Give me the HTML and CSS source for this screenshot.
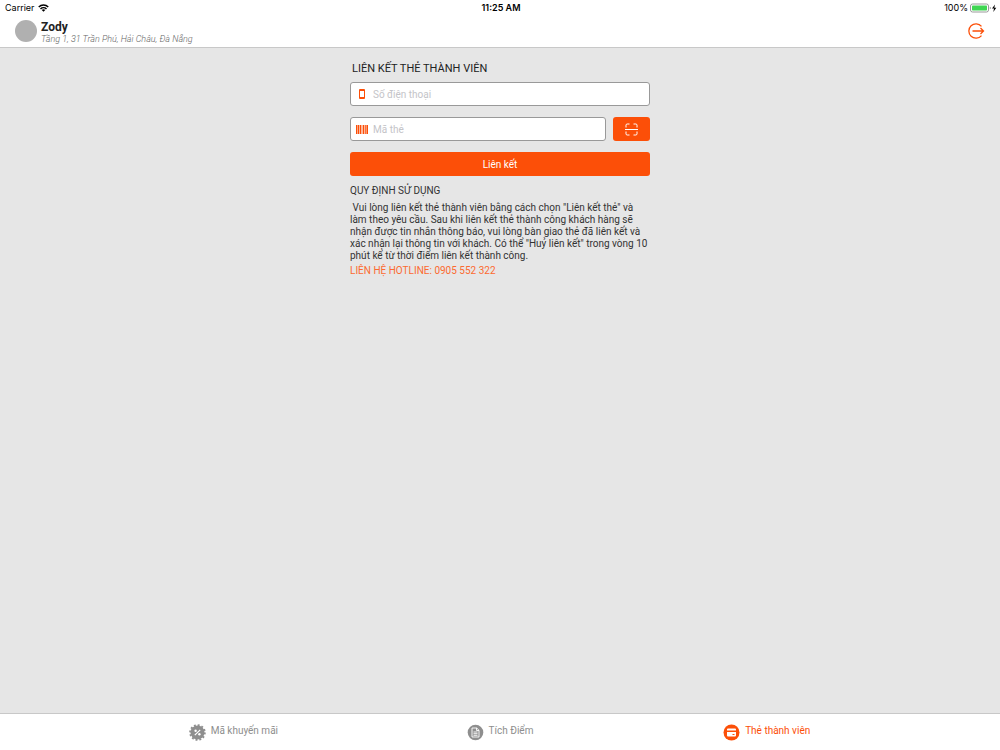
FILE: index.html
```html
<!DOCTYPE html>
<html lang="vi">
<head>
<meta charset="utf-8">
<meta name="viewport" content="width=device-width, initial-scale=1">
<title>Zody</title>
<link rel="stylesheet" href="styles.css">
</head>
<body>
<div class="status">
  <div class="status-side">
    <span>Carrier</span>
    <svg width="11" height="8" viewBox="0 0 22 16" fill="none" stroke="#000" stroke-width="3"><path d="M1.500 6a13.500 13.500 0 0 1 19 0M5 10a8.500 8.500 0 0 1 12 0"/><path d="M11 15.500 7.500 12.200a5 5 0 0 1 7 0z" fill="#000" stroke="none"/></svg>
  </div>
  <strong class="clock">11:25 AM</strong>
  <div class="status-side status-right">
    <span>100%</span>
    <svg width="27" height="10" viewBox="0 0 27 10"><rect x=".5" y="1" width="18" height="8" rx="2" fill="#fff" stroke="#999"/><rect x="2" y="2.500" width="15" height="5" rx=".7" fill="#3fd652"/><path d="M19.800 3.700v2.600q1-.3 1-1.300t-1-1.300" fill="#888"/><path d="M25 1.500 22 5.500h2L23.300 9l3-4.300h-2z" fill="#000"/></svg>
  </div>
</div>
<header class="header">
  <div class="avatar"></div>
  <div class="shop">
    <h1 class="shop-name">Zody</h1>
    <p class="shop-address">Tầng 1, 31 Trần Phú, Hải Châu, Đà Nẵng</p>
  </div>
  <button class="logout" type="button" aria-label="Đăng xuất">
    <svg width="18" height="18" viewBox="0 0 18 18" fill="none" stroke="#fc4f08" stroke-width="1.300"><path d="M14.500 4.300a7.200 7.200 0 1 0 0 9.400M5.500 9h11M13.500 6 16.500 9l-3 3"/></svg>
  </button>
</header>
<main class="main">
  <form class="card-form">
    <h2 class="form-title">LIÊN KẾT THẺ THÀNH VIÊN</h2>
    <label class="field">
      <svg width="12" height="12" viewBox="0 0 12 12"><rect x="3" y="1" width="6" height="10" rx="1" fill="#fc4f08"/><path d="M4 3h4v6H4z" fill="#fff"/></svg>
      <input class="input" type="tel" placeholder="Số điện thoại" aria-label="Số điện thoại">
    </label>
    <div class="code-row">
      <label class="field code-field">
        <svg width="12" height="9" viewBox="0 0 12 9" fill="#fc4f08"><path d="M0 0h1.500v9H0zM2 0h1v9H2zM3.600 0h1.400v9H3.600zM5.600 0h.8v9h-.8zM7 0h1.400v9H7zM9 0h.8v9H9zM10.400 0H12v9h-1.600z"/></svg>
        <input class="input" type="text" placeholder="Mã thẻ" aria-label="Mã thẻ">
      </label>
      <button class="button scan" type="button" aria-label="Quét mã thẻ">
        <svg width="13" height="13" viewBox="0 0 13 13" fill="none" stroke="#fff"><path d="M1 4.500V2.200Q1 1 2.200 1H4.500M8.500 1h2.300Q12 1 12 2.200v2.300M12 8.500v2.300q0 1.200-1.200 1.200H8.500M4.500 12H2.200Q1 12 1 10.800V8.500M0 6.500h13"/></svg>
      </button>
    </div>
    <button class="button submit" type="button">Liên kết</button>
  </form>
  <section class="rules">
    <h2 class="rules-title">QUY ĐỊNH SỬ DỤNG</h2>
    <p class="rules-text">&nbsp;Vui lòng liên kết thẻ thành viên bằng cách chọn "Liên kết thẻ" và<br>làm theo yêu cầu. Sau khi liên kết thẻ thành công khách hàng sẽ<br>nhận được tin nhắn thông báo, vui lòng bàn giao thẻ đã liên kết và<br>xác nhận lại thông tin với khách. Có thể "Huỷ liên kết" trong vòng 10<br>phút kể từ thời điểm liên kết thành công.</p>
    <p class="hotline">LIÊN HỆ HOTLINE: 0905 552 322</p>
  </section>
</main>
<nav class="tabs">
  <button class="tab" type="button">
    <svg width="17" height="17" viewBox="-8.500 -8.500 17 17"><circle r="7" fill="#8e8e8e"/><circle r="7.400" fill="none" stroke="#8e8e8e" stroke-width="1.800" stroke-dasharray="1.937 1.937"/><path d="M-2.700 2.700 2.700-2.700" stroke="#fff" stroke-width="1.200"/><circle cx="-1.900" cy="-1.700" r="1.200" fill="#fff"/><circle cx="1.900" cy="1.700" r="1.200" fill="#fff"/></svg>
    <span class="tab-label">Mã khuyến mãi</span>
  </button>
  <button class="tab" type="button">
    <svg width="17" height="17" viewBox="0 0 17 17"><circle cx="8.500" cy="8.500" r="7.800" fill="#8e8e8e"/><path d="M5 4h4.700L12 6.300V13H5zM9.500 4v2.500H12M6.500 8h4M6.500 9.700h4M6.500 11.300h4" fill="none" stroke="#fff" stroke-width=".9"/></svg>
    <span class="tab-label">Tích Điểm</span>
  </button>
  <button class="tab tab-active" type="button">
    <svg width="17" height="17" viewBox="0 0 17 17"><circle cx="8.500" cy="8.500" r="8" fill="#fc4f08"/><path d="M5 4.500h7q1 0 1 1v1H4v-1q0-1 1-1M4 8h9v3.500q0 1-1 1H5q-1 0-1-1z" fill="#fff"/><path d="M9.500 10.500h2" stroke="#fc4f08"/></svg>
    <span class="tab-label">Thẻ thành viên</span>
  </button>
</nav>
</body>
</html>
```
FILE: styles.css
```css
* {
  box-sizing: border-box;
}

body {
  margin: 0;
  min-height: 100vh;
  display: flex;
  flex-direction: column;
  background: #e6e6e6;
  color: #333;
  font-family: Roboto, "Noto Sans", sans-serif;
  font-size: 10px;
}

h1, h2, p {
  margin: 0;
}

svg {
  display: block;
  flex: none;
}

button, input {
  font: inherit;
  border: 0;
  padding: 0;
  background: none;
}

.status {
  display: flex;
  align-items: center;
  height: 15px;
  padding: 0 3px 0 5px;
  background: #fff;
  color: #000;
  font-family: Inter, sans-serif;
  font-size: 9px;
}

.status-side {
  flex: 1;
  display: flex;
  align-items: center;
  gap: 3px;
}

.status-right {
  justify-content: flex-end;
  gap: 2px;
}

.clock {
  font-weight: 600;
}

.header {
  display: flex;
  align-items: center;
  gap: 4px;
  height: 33px;
  padding: 0 15px;
  background: #fff;
  border-bottom: 1px solid #c8c8c8;
}

.avatar {
  width: 22px;
  height: 22px;
  border-radius: 50%;
  background: #b0b0b0;
}

.shop {
  flex: 1;
  padding-top: 3px;
}

.shop-name {
  color: #222;
  font-size: 12px;
  line-height: 14px;
  font-weight: 700;
}

.shop-address {
  color: #666;
  font-size: 9px;
  line-height: 11px;
  font-style: italic;
  font-weight: 300;
}

.logout {
  cursor: pointer;
}

.main {
  flex: 1;
  width: 100%;
  max-width: 300px;
  margin: 0 auto;
  padding-top: 13px;
}

.card-form {
  display: flex;
  flex-direction: column;
  gap: 11px;
}

.form-title {
  margin-bottom: -6px;
  padding-left: 2px;
  color: #222;
  font-size: 11px;
  line-height: 16px;
  font-weight: 400;
}

.field {
  display: flex;
  align-items: center;
  gap: 5px;
  height: 24px;
  padding: 0 5px;
  background: #fff;
  border: 1px solid #999;
  border-radius: 3px;
}

.input {
  flex: 1;
  min-width: 0;
  outline: 0;
}

.input::placeholder {
  color: #c4c4c8;
  opacity: 1;
}

.code-row {
  display: flex;
  gap: 7px;
}

.code-field {
  flex: 1;
}

.button {
  display: flex;
  align-items: center;
  justify-content: center;
  height: 24px;
  border-radius: 3px;
  background: #fc4f08;
  color: #fff;
  cursor: pointer;
}

.scan {
  width: 37px;
}

.submit {
  font-size: 10px;
}

.rules {
  padding-top: 8px;
}

.rules-title {
  font-size: 10px;
  line-height: 14px;
  font-weight: 400;
}

.rules-text {
  padding: 4px 0 2px;
  line-height: 12px;
  white-space: nowrap;
}

.hotline {
  color: #fc6a30;
  line-height: 14px;
}

.tabs {
  display: flex;
  height: 37px;
  padding: 0 10%;
  background: #fff;
  border-top: 1px solid #c8c8c8;
}

.tab {
  flex: 1;
  display: flex;
  align-items: center;
  justify-content: center;
  gap: 5px;
  color: #8e8e8e;
  cursor: pointer;
}

.tab-label {
  padding-bottom: 3px;
}

.tab-active {
  color: #fc4f08;
}
```
